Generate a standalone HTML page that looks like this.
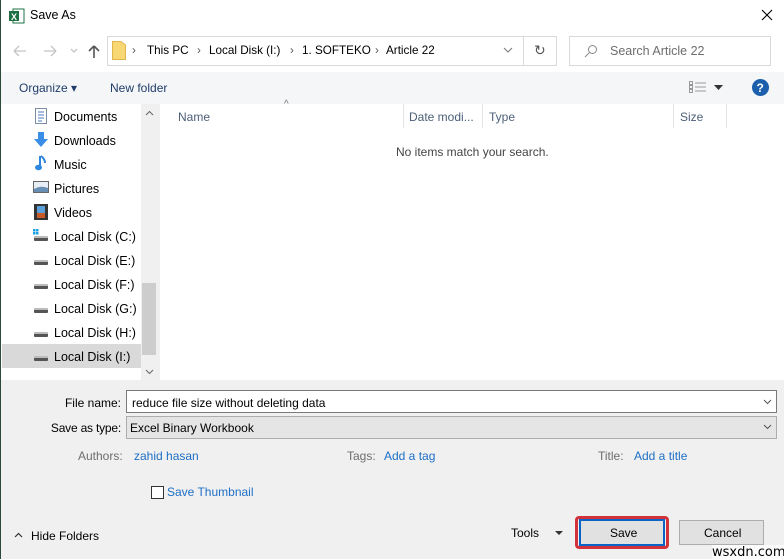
<!DOCTYPE html>
<html><head><meta charset="utf-8"><style>
*{box-sizing:border-box;margin:0;padding:0}
body{width:784px;height:559px;overflow:hidden;background:#fff;font-family:"Liberation Sans",sans-serif;font-size:12px;color:#000;position:relative}
.a{position:absolute;white-space:nowrap}
.blue{color:#1e6fc6}
.gray{color:#6d6d6d}
.r{position:absolute;white-space:nowrap;text-align:right;width:120px}
.drv{position:absolute;left:34px;width:14px;height:5px;background:#555;border-top:2px solid #bbb;border-radius:1px}
.bc{position:absolute;top:44px;font-size:11.7px;white-space:nowrap}
</style></head><body>
<div class="a" style="left:0;top:0;width:1px;height:559px;background:#2b4a3a"></div>
<svg class="a" style="left:9px;top:8px" width="16" height="16"><rect x="4" y="1" width="11" height="14" fill="#fff" stroke="#1f7244"/><rect x="0" y="3" width="10" height="10" fill="#1d6f42"/><text x="2" y="12" font-size="9" font-weight="bold" fill="#fff" font-family="Liberation Sans">X</text></svg>
<div class="a" style="left:30px;top:8px;font-size:12.5px">Save As</div>
<svg class="a" style="left:761px;top:9px" width="12" height="12"><path d="M1 1L11 11M11 1L1 11" stroke="#000" stroke-width="1.1"/></svg>
<svg class="a" style="left:12px;top:44px" width="100" height="16" fill="none" stroke-width="1.3">
<path d="M2 7H14M2 7L7 2M2 7L7 12" stroke="#c4c4c4"/>
<path d="M32 7H44M44 7L39 2M44 7L39 12" stroke="#c4c4c4"/>
<path d="M59 5L62 8L65 5" stroke="#c4c4c4"/>
<path d="M82 14V2M82 2L77 7M82 2L87 7" stroke="#555" stroke-width="1.6"/></svg>
<div class="a" style="left:107px;top:36px;width:450px;height:30px;border:1px solid #d9d9d9"></div>
<div class="a" style="left:523px;top:37px;width:1px;height:28px;background:#d9d9d9"></div>
<svg class="a" style="left:112px;top:41px" width="14" height="19"><path d="M0.5 0.5H9L13.5 4V18.5H0.5Z" fill="#f8d775" stroke="#e0b64a"/></svg>
<div class="bc" style="left:132px;color:#555">›</div><div class="bc" style="left:147px">This PC</div>
<div class="bc" style="left:197px;color:#555">›</div><div class="bc" style="left:209px">Local Disk (I:)</div>
<div class="bc" style="left:290px;color:#555">›</div><div class="bc" style="left:302px">1. SOFTEKO</div>
<div class="bc" style="left:375px;color:#555">›</div><div class="bc" style="left:386px">Article 22</div>
<svg class="a" style="left:503px;top:46px" width="10" height="8"><path d="M1 2L5 6L9 2" stroke="#777" fill="none"/></svg>
<div class="a" style="left:534px;top:42px;font-size:14px;color:#555">↻</div>
<div class="a" style="left:569px;top:36px;width:202px;height:30px;border:1px solid #d9d9d9"></div>
<svg class="a" style="left:584px;top:44px" width="14" height="14"><circle cx="8.5" cy="5.5" r="4" stroke="#888" fill="none"/><path d="M5.5 8.5L1 13" stroke="#888"/></svg>
<div class="a gray" style="left:610px;top:44px;font-size:12.5px">Search Article 22</div>
<div class="a" style="left:1px;top:72px;width:783px;height:32px;background:#f5f6f7"></div>
<div class="a" style="left:19px;top:81px;color:#1e3d6b">Organize ▾</div>
<div class="a" style="left:110px;top:81px;color:#1e3d6b">New folder</div>
<svg class="a" style="left:689px;top:81px" width="18" height="12" stroke="#999" fill="none"><rect x="0.5" y="0.5" width="3" height="3"/><rect x="0.5" y="4.5" width="3" height="3"/><rect x="0.5" y="8.5" width="3" height="3"/><path d="M6 2H17M6 6H17M6 10H17"/></svg>
<svg class="a" style="left:714px;top:85px" width="9" height="5"><path d="M0 0H9L4.5 5Z" fill="#333"/></svg>
<svg class="a" style="left:752px;top:79px" width="17" height="17"><circle cx="8.5" cy="8.5" r="8.5" fill="#1b5fad"/><text x="4.5" y="13" font-size="12" font-weight="bold" fill="#fff" font-family="Liberation Sans">?</text></svg>
<div class="a" style="left:2px;top:344px;width:139px;height:24px;background:#d9d9d9"></div>
<div class="a" style="left:141px;top:104px;width:16px;height:276px;background:#f0f0f0"></div>
<div class="a" style="left:142px;top:283px;width:14px;height:72px;background:#cdcdcd"></div>
<svg class="a" style="left:145px;top:110px" width="9" height="6"><path d="M1 5L4.5 1.5L8 5" stroke="#666" fill="none"/></svg>
<svg class="a" style="left:145px;top:369px" width="9" height="6"><path d="M1 1L4.5 4.5L8 1" stroke="#666" fill="none"/></svg>
<div class="a" style="left:157px;top:104px;width:3px;height:276px;background:#f0f0f0"></div>
<svg class="a" style="left:34px;top:108px" width="14" height="16"><rect x="1.5" y="0.5" width="11" height="15" fill="#fff" stroke="#7a8ea8"/><path d="M4 4H10M4 7H10M4 10H10M4 13H8" stroke="#4a7ac0"/></svg>
<svg class="a" style="left:33px;top:132px" width="16" height="16"><path d="M5 0H11V7H15L8 15L1 7H5Z" fill="#3a8ee6"/></svg>
<svg class="a" style="left:35px;top:155px" width="12" height="16"><path d="M5 1V12" stroke="#2e86de" stroke-width="2"/><ellipse cx="3.5" cy="12.5" rx="3.5" ry="2.7" fill="#2e86de"/><path d="M6 1Q10 4 10 8" stroke="#2e86de" stroke-width="2" fill="none"/></svg>
<svg class="a" style="left:33px;top:181px" width="16" height="12"><rect x="0.5" y="0.5" width="15" height="11" fill="#e8eef5" stroke="#666"/><path d="M1 8Q8 4 15 7V11H1Z" fill="#6a8fb5"/></svg>
<svg class="a" style="left:34px;top:204px" width="14" height="16"><rect width="14" height="16" fill="#333"/><rect x="3" y="2" width="8" height="12" fill="#5a9fd8"/><rect x="3" y="9" width="8" height="5" fill="#c85a2a"/></svg>
<svg class="a" style="left:33px;top:229px" width="6" height="6"><rect width="2.5" height="2.5" fill="#1ba1e2"/><rect x="3" width="2.5" height="2.5" fill="#1ba1e2"/><rect y="3" width="2.5" height="2.5" fill="#1ba1e2"/><rect x="3" y="3" width="2.5" height="2.5" fill="#1ba1e2"/></svg>
<div class="drv" style="top:236px"></div><div class="drv" style="top:260px"></div><div class="drv" style="top:284px"></div><div class="drv" style="top:308px"></div><div class="drv" style="top:332px"></div><div class="drv" style="top:356px"></div>
<div class="a" style="left:54px;top:105px;line-height:24px;font-size:12.5px">Documents<br>Downloads<br>Music<br>Pictures<br>Videos<br>Local Disk (C:)<br>Local Disk (E:)<br>Local Disk (F:)<br>Local Disk (G:)<br>Local Disk (H:)<br>Local Disk (I:)</div>
<div class="a" style="left:284px;top:99px;font-size:10px;color:#777">^</div>
<div class="a" style="left:178px;top:110px;color:#4c607a">Name</div>
<div class="a" style="left:403px;top:104px;width:1px;height:24px;background:#e5e5e5"></div>
<div class="a" style="left:409px;top:110px;color:#4c607a">Date modi...</div>
<div class="a" style="left:482px;top:104px;width:1px;height:24px;background:#e5e5e5"></div>
<div class="a" style="left:489px;top:110px;color:#4c607a">Type</div>
<div class="a" style="left:673px;top:104px;width:1px;height:24px;background:#e5e5e5"></div>
<div class="a" style="left:680px;top:110px;color:#4c607a">Size</div>
<div class="a" style="left:726px;top:104px;width:1px;height:24px;background:#e5e5e5"></div>
<div class="a" style="left:396px;top:145px;color:#444">No items match your search.</div>
<div class="a" style="left:1px;top:380px;width:783px;height:179px;background:#f0f0f0"></div>
<div class="r" style="left:1px;top:396px">File name:</div>
<div class="a" style="left:126px;top:390px;width:651px;height:23px;background:#fff;border:1px solid #7a7a7a"></div>
<div class="a" style="left:132px;top:396px">reduce file size without deleting data</div>
<div class="r" style="left:1px;top:421px;letter-spacing:-0.2px">Save as type:</div>
<div class="a" style="left:126px;top:416px;width:651px;height:23px;background:#e5e5e5;border:1px solid #adadad"></div>
<div class="a" style="left:130px;top:421px">Excel Binary Workbook</div>
<svg class="a" style="left:763px;top:399px" width="9" height="6"><path d="M1 1L4.5 4.5L8 1" stroke="#555" fill="none"/></svg>
<svg class="a" style="left:763px;top:424px" width="9" height="6"><path d="M1 1L4.5 4.5L8 1" stroke="#555" fill="none"/></svg>
<div class="a gray" style="left:78px;top:449px">Authors:</div>
<div class="a blue" style="left:134px;top:449px">zahid hasan</div>
<div class="a gray" style="left:347px;top:449px">Tags:</div>
<div class="a blue" style="left:384px;top:449px">Add a tag</div>
<div class="a gray" style="left:598px;top:449px">Title:</div>
<div class="a blue" style="left:634px;top:449px">Add a title</div>
<div class="a" style="left:151px;top:486px;width:13px;height:13px;border:1px solid #333;background:#fff"></div>
<div class="a blue" style="left:167px;top:485px">Save Thumbnail</div>
<svg class="a" style="left:14px;top:532px" width="9" height="6"><path d="M1 5L4.5 1.5L8 5" stroke="#333" fill="none" stroke-width="1.2"/></svg>
<div class="a" style="left:31px;top:529px">Hide Folders</div>
<div class="a" style="left:511px;top:526px">Tools</div>
<svg class="a" style="left:555px;top:531px" width="8" height="4"><path d="M0 0H8L4 4Z" fill="#333"/></svg>
<div class="a" style="left:575px;top:516px;width:94px;height:33px;border:3px solid #d2323a;border-radius:4px"></div>
<div class="a" style="left:579px;top:519px;width:86px;height:27px;background:#e1e1e1;border:2px solid #0a64c8"></div>
<div class="a" style="left:610px;top:526px">Save</div>
<div class="a" style="left:679px;top:520px;width:85px;height:25px;background:#e1e1e1;border:1px solid #adadad"></div>
<div class="a" style="left:704px;top:526px">Cancel</div>
<div class="a" style="left:712px;top:545px;font-size:13px;color:#000;background:rgba(255,255,255,.7);font-family:'DejaVu Sans',sans-serif">wsxdn.com</div>
</body></html>
